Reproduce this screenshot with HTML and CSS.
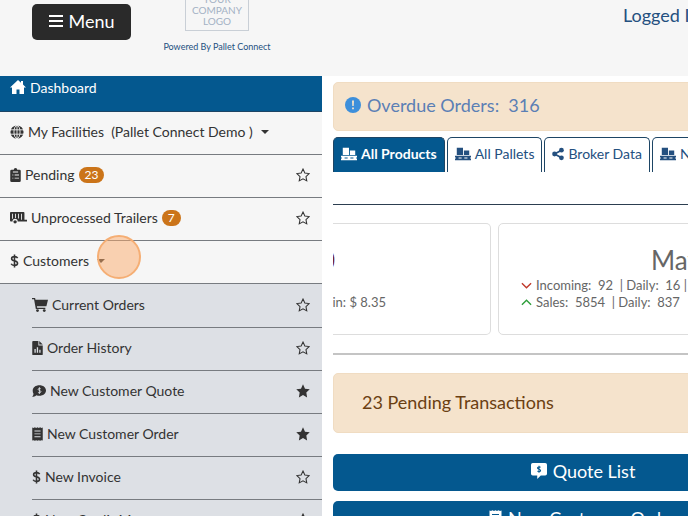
FILE: index.html
```
<!DOCTYPE html>
<html lang="en">
  <head>
    <meta charset="UTF-8" />
    <meta name="viewport" content="width=device-width, initial-scale=1.0" />
    <title>Pallet Connect - Dashboard</title>
    <link rel="stylesheet" href="styles.css">
  </head>
  <body>
    <!-- icon set -->
    <svg class="icon-defs" aria-hidden="true">
      <symbol id="bars" viewBox="0 0 16 16"><path d="M1 2h14v2H1zM1 7h14v2H1zM1 12h14v2H1z"/></symbol>
      <symbol id="home" viewBox="0 0 16 16"><path d="M8 1 0 8.400h2V15h4.500v-4.500h3V15H14V8.400h2L13 5.600V2h-2v1.800z"/></symbol>
      <symbol id="globe" viewBox="0 0 16 16"><circle cx="8" cy="8" r="7.500"/><path d="M0 5.500h16M0 10.500h16M8 0v16" fill="none" stroke="#f6f6f6"/><ellipse cx="8" cy="8" rx="3.500" ry="7.500" fill="none" stroke="#f6f6f6"/></symbol>
      <symbol id="clipboard" viewBox="0 0 12 16"><path fill-rule="evenodd" d="M1.500 2H4a2 2 0 0 1 4 0h2.500A1.500 1.500 0 0 1 12 3.500v11a1.500 1.500 0 0 1-1.500 1.500h-9A1.500 1.500 0 0 1 0 14.500v-11A1.500 1.500 0 0 1 1.500 2zM3 4v1h6V4zM2.500 7.500v1h1v-1zm2.500 0v1h5v-1zM2.500 11v1h1v-1zM5 11v1h5v-1z"/></symbol>
      <symbol id="trailer" viewBox="0 0 20 16"><path fill-rule="evenodd" d="M1 1h15a1 1 0 0 1 1 1v8h3v2H9a3 3 0 0 0-6 0H1a1 1 0 0 1-1-1V2a1 1 0 0 1 1-1zm1.500 2v6h1V3zm3.500 0v5h1V3zm3.500 0v5.500h1V3zM13 3v7h1V3z"/><circle cx="6" cy="12.500" r="2"/></symbol>
      <symbol id="dollar" viewBox="0 0 10 16"><path d="M8.600 4.600C8 3.500 6.700 3 5 3 3 3 1.700 3.900 1.700 5.300 1.700 8.600 8.500 7 8.500 10.600 8.500 12.200 7 13 5 13c-1.800 0-3.200-.600-3.800-1.900M5 .500v15" fill="none" stroke="currentColor" stroke-width="1.800"/></symbol>
      <symbol id="cart" viewBox="0 0 18 16"><path d="M0 0h3.500l.400 2H18l-1.800 7.500H5.500l.300 1.500H15v1.500H4.300L2.300 1.500H0z"/><circle cx="6.200" cy="14.300" r="1.600"/><circle cx="13.800" cy="14.300" r="1.600"/></symbol>
      <symbol id="file" viewBox="0 0 12 16"><path fill-rule="evenodd" d="M1 0h6v5h5v10a1 1 0 0 1-1 1H1a1 1 0 0 1-1-1V1a1 1 0 0 1 1-1zm1.500 9v4.500H4V9zm2.700-2v6.500h1.500V7zM8 10v3.500h1.500V10z"/><path d="M8 0v4h4z"/></symbol>
      <symbol id="quote" viewBox="0 0 16 16"><path d="M8.500 1.500C12.800 1.500 16 4 16 7.500s-3.200 6-7.500 6c-1.300 0-2.500-.200-3.500-.700C3.800 14 2 14.700 0 14.700c1-1 1.700-2.200 1.700-3.500C1 10 .800 8.800.800 7.500c0-3.500 3.400-6 7.700-6z"/><path d="M10 5.500C9.200 4.800 7 4.800 7 6.200s3.200 1 3.200 2.500S7.600 10.400 6.800 9.500M8.500 3.700v7.600" fill="none" stroke="#dde0e5"/></symbol>
      <symbol id="receipt" viewBox="0 0 12 16"><path fill-rule="evenodd" d="M0 .5 1.500 1 3 .3 4.500 1 6 .3 7.500 1 9 .3 10.500 1 12 .5v15l-1.500-.500-1.500.700-1.500-.700-1.500.700-1.500-.700-1.500.700L1.500 15 0 15.500zM2.500 4v1h7V4zm0 3.300v1h7v-1zm0 3.400v1h7v-1z"/></symbol>
      <symbol id="star" viewBox="0 0 16 16"><path d="m8 .4 2.300 4.900 5.400.700-3.900 3.800.900 5.500L8 12.700 3.300 15.300l.900-5.500L.3 6l5.400-.700z"/></symbol>
      <symbol id="star-line" viewBox="0 0 16 16"><path d="m8 1.200 2.100 4.500 4.900.700-3.600 3.400.900 4.900L8 12.300l-4.300 2.400.900-4.900L1 6.400l4.900-.700z" fill="none" stroke="currentColor" stroke-width="1.200"/></symbol>
      <symbol id="alert" viewBox="0 0 16 16"><circle cx="8" cy="8" r="8"/><path d="M7 3.500h2L8.700 9H7.300zM7.100 10.500h1.800v1.800H7.100z" fill="#f5e3cc"/></symbol>
      <symbol id="pallet" viewBox="0 0 18 16"><path d="M2 1h7v8H2zM10 4h6v5h-6zM0 10h18v1.800H0zM1 11h3v3H1zM7.500 11h3v3h-3zM14 11h3v3h-3zM0 13.200h18V15H0z"/></symbol>
      <symbol id="share" viewBox="0 0 14 16"><path d="M11 3.500 3 8l8 4.500" fill="none" stroke="currentColor" stroke-width="2"/><circle cx="11" cy="3.500" r="2.800"/><circle cx="3" cy="8" r="2.800"/><circle cx="11" cy="12.500" r="2.800"/></symbol>
      <symbol id="down" viewBox="0 0 12 12"><path d="m1 3.500 5 5 5-5" fill="none" stroke="currentColor" stroke-width="1.500"/></symbol>
      <symbol id="up" viewBox="0 0 12 12"><path d="m1 8.500 5-5 5 5" fill="none" stroke="currentColor" stroke-width="1.500"/></symbol>
      <symbol id="quote-box" viewBox="0 0 18 18"><path d="M2 0h14a2 2 0 0 1 2 2v10a2 2 0 0 1-2 2h-5l-4 4v-4H2a2 2 0 0 1-2-2V2a2 2 0 0 1 2-2z"/><path d="M10.700 5C9.800 4 7.300 4.200 7.300 5.700s3.500 1 3.500 2.600-2.800 1.700-3.600.700M9 3v8" fill="none" stroke="#04588f" stroke-width="1.200"/></symbol>
    </svg>

    <header class="topbar">
      <button class="menu-btn" type="button"><svg class="icon"><use href="#bars"/></svg> Menu</button>
      <div class="brand">
        <div class="logo"><span>YOUR</span><span>COMPANY</span><span>LOGO</span></div>
        <a href="#">Powered By Pallet Connect</a>
      </div>
      <a class="user-link" href="#">Logged In</a>
    </header>

    <div class="page">
      <nav class="sidebar">
        <a class="active" href="#"><svg class="icon"><use href="#home"/></svg> Dashboard</a>
        <ul class="menu">
          <li><a href="#"><svg class="icon small"><use href="#globe"/></svg> My Facilities&nbsp; (Pallet Connect Demo ) <i class="caret"></i></a></li>
          <li>
            <a href="#"><svg class="icon narrow"><use href="#clipboard"/></svg> Pending <span class="badge">23</span></a>
            <button class="fav" type="button" aria-label="Favourite"><svg class="icon"><use href="#star-line"/></svg></button>
          </li>
          <li>
            <a href="#"><svg class="icon wide"><use href="#trailer"/></svg> Unprocessed Trailers <span class="badge">7</span></a>
            <button class="fav" type="button" aria-label="Favourite"><svg class="icon"><use href="#star-line"/></svg></button>
          </li>
          <li><a href="#"><svg class="icon thin"><use href="#dollar"/></svg> Customers <i class="caret"></i></a><span class="click-mark"></span></li>
        </ul>
        <ul class="menu submenu">
          <li>
            <a href="#"><svg class="icon"><use href="#cart"/></svg> Current Orders</a>
            <button class="fav" type="button" aria-label="Favourite"><svg class="icon"><use href="#star-line"/></svg></button>
          </li>
          <li>
            <a href="#"><svg class="icon narrow"><use href="#file"/></svg> Order History</a>
            <button class="fav" type="button" aria-label="Favourite"><svg class="icon"><use href="#star-line"/></svg></button>
          </li>
          <li>
            <a href="#"><svg class="icon small"><use href="#quote"/></svg> New Customer Quote</a>
            <button class="fav" type="button" aria-label="Favourite"><svg class="icon"><use href="#star"/></svg></button>
          </li>
          <li>
            <a href="#"><svg class="icon narrow"><use href="#receipt"/></svg> New Customer Order</a>
            <button class="fav" type="button" aria-label="Favourite"><svg class="icon"><use href="#star"/></svg></button>
          </li>
          <li>
            <a href="#"><svg class="icon thin"><use href="#dollar"/></svg> New Invoice</a>
            <button class="fav" type="button" aria-label="Favourite"><svg class="icon"><use href="#star-line"/></svg></button>
          </li>
          <li>
            <a href="#"><svg class="icon thin"><use href="#dollar"/></svg> New Credit Memo</a>
            <button class="fav" type="button" aria-label="Favourite"><svg class="icon"><use href="#star-line"/></svg></button>
          </li>
        </ul>
      </nav>

      <main class="content">
        <a class="notice overdue" href="#"><svg class="icon"><use href="#alert"/></svg> Overdue Orders:&nbsp; 316</a>
        <div class="tabs">
          <button class="tab current" type="button"><svg class="icon"><use href="#pallet"/></svg> All Products</button>
          <button class="tab" type="button"><svg class="icon"><use href="#pallet"/></svg> All Pallets</button>
          <button class="tab" type="button"><svg class="icon share"><use href="#share"/></svg> Broker Data</button>
          <button class="tab" type="button"><svg class="icon"><use href="#pallet"/></svg> New Pallets</button>
        </div>
        <hr class="rule">
        <div class="cards">
          <section class="card">
            <h2 class="total">0</h2>
            <p class="margin">Margin: $ 8.35</p>
          </section>
          <section class="card">
            <h2>May</h2>
            <p><svg class="icon down"><use href="#down"/></svg> Incoming:&nbsp; 92&nbsp; | Daily:&nbsp; 16 |</p>
            <p><svg class="icon up"><use href="#up"/></svg> Sales:&nbsp; 5854&nbsp; | Daily:&nbsp; 837</p>
          </section>
        </div>
        <hr class="rule thick">
        <div class="notice pending">23 Pending Transactions</div>
        <button class="action" type="button"><svg class="icon"><use href="#quote-box"/></svg> Quote List</button>
        <button class="action" type="button"><svg class="icon receipt"><use href="#receipt"/></svg> New Customer Order</button>
      </main>
    </div>
  </body>
</html>
```
FILE: styles.css
```
* {
  margin: 0;
  padding: 0;
  box-sizing: border-box;
}

body {
  font-family: Lato, "Open Sans", sans-serif;
  font-size: 14px;
  color: #333;
  background-color: #fff;
  height: 100vh;
  overflow: hidden;
}

a {
  color: inherit;
  text-decoration: none;
}

button {
  font: inherit;
  color: inherit;
  border: none;
  background: none;
  cursor: pointer;
}

.icon-defs {
  display: none;
}

.icon {
  width: 16px;
  height: 16px;
  fill: currentColor;
  flex: none;
}

.icon.small {
  width: 14px;
  height: 14px;
}

.icon.narrow {
  width: 11px;
  height: 14px;
}

.icon.thin {
  width: 9px;
  height: 14px;
}

.icon.wide {
  width: 17px;
  height: 14px;
}

.icon.share {
  width: 12px;
}

.icon.receipt {
  width: 13px;
}

/* top bar */
.topbar {
  display: flex;
  align-items: flex-end;
  height: 76px;
  padding-left: 32px;
  background-color: #f6f6f6;
  color: #24507f;
  overflow: hidden;
}

.menu-btn {
  display: flex;
  align-items: center;
  justify-content: center;
  flex: none;
  gap: 4px;
  width: 99px;
  height: 36px;
  margin-bottom: 36px;
  padding-bottom: 3px;
  border-radius: 5px;
  background-color: #2a2a2a;
  color: #fff;
  font-size: 18px;
}

.brand {
  display: flex;
  flex: none;
  flex-direction: column;
  align-items: center;
  width: 108px;
  margin-left: 32px;
  margin-bottom: 24px;
  font-size: 9px;
  white-space: nowrap;
}

.logo {
  display: flex;
  flex-direction: column;
  align-items: center;
  width: 64px;
  margin-bottom: 10px;
  padding: 3px 0;
  border: 1px solid #c9cfd6;
  color: #a3b1c4;
  font-size: 10px;
  line-height: 11px;
}

.user-link {
  flex: none;
  margin-left: 352px;
  margin-bottom: 50px;
  font-size: 18px;
  white-space: nowrap;
}

/* layout */
.page {
  display: flex;
  gap: 11px;
}

.sidebar {
  flex: none;
  width: 322px;
  background-color: #f6f6f6;
}

.content {
  flex: 1 0 500px;
  min-width: 0;
  padding-top: 6px;
}

/* sidebar menu */
.active {
  display: flex;
  align-items: flex-start;
  gap: 4px;
  height: 36px;
  padding: 3px 10px;
  background-color: #04588f;
  border-bottom: 1px solid #1d4565;
  color: #fff;
}

.menu {
  list-style: none;
}

.menu li {
  display: flex;
  align-items: center;
  justify-content: space-between;
  position: relative;
  height: 43px;
  padding: 0 12px 3px 10px;
  border-bottom: 1px solid #777b80;
}

.menu a {
  display: flex;
  align-items: center;
  gap: 4px;
}

.submenu {
  padding: 1px 0 0 32px;
  background-color: #dde0e5;
}

.submenu li {
  padding-left: 0;
}

.fav {
  display: flex;
}

.fav .icon {
  width: 14px;
  height: 14px;
}

.badge {
  padding: 0 6px;
  border-radius: 8px;
  background-color: #cb7419;
  color: #fff;
  font-size: 12px;
  line-height: 16px;
}

.caret {
  margin-left: 4px;
  border: 4px solid transparent;
  border-top-color: currentColor;
  border-bottom: 0;
}

.click-mark {
  position: absolute;
  top: -6px;
  left: 97px;
  width: 44px;
  height: 44px;
  border: 2px solid #f5ae74;
  border-radius: 50%;
  background-color: rgba(251, 170, 105, 0.5);
}

/* dashboard */
.notice {
  display: flex;
  align-items: center;
  gap: 6px;
  border: 1px solid #f0dcc2;
  border-radius: 5px;
  background-color: #f5e3cc;
  font-size: 18px;
}

.overdue {
  height: 49px;
  padding: 0 11px 3px;
  color: #5b7fb5;
}

.overdue .icon {
  color: #3d8fdb;
}

.tabs {
  display: flex;
  gap: 2px;
  margin-top: 6px;
}

.tab {
  display: flex;
  align-items: center;
  flex: none;
  gap: 4px;
  height: 35px;
  padding: 0 7px 3px;
  border: 1px solid #1d4565;
  border-bottom: 0;
  border-radius: 5px 5px 0 0;
  color: #24507f;
  white-space: nowrap;
}

.tab.current {
  background-color: #04588f;
  color: #fff;
  font-weight: bold;
}

.rule {
  margin-top: 32px;
  border: none;
  border-top: 1px solid #2c3e50;
}

.rule.thick {
  margin-top: 18px;
  border-top: 2px solid #c4c4c4;
}

.cards {
  display: flex;
  gap: 7px;
  margin-top: 18px;
  color: #666;
  font-size: 13px;
}

.card {
  flex: none;
  width: 356px;
  height: 112px;
  padding: 19px 22px;
  border: 1px solid #ddd;
  border-radius: 5px;
}

.card:first-child {
  width: 158px;
  padding: 19px 0;
  border-left: 0;
  border-radius: 0 5px 5px 0;
}

.card h2 {
  font-size: 26px;
  font-weight: normal;
  line-height: 34px;
  text-align: center;
}

.card p {
  display: flex;
  align-items: center;
  gap: 4px;
  line-height: 17px;
}

.card .icon {
  width: 11px;
  height: 11px;
}

/* the first card is scrolled half out of view */
.card .total,
.card .margin {
  display: flex;
  justify-content: flex-end;
  overflow: hidden;
  white-space: nowrap;
}

.card .total {
  width: 2px;
  color: #7a2222;
}

.card .margin {
  width: 53px;
  margin-top: 17px;
}

.down {
  color: #c0392b;
}

.up {
  color: #2e9e3a;
}

.pending {
  height: 60px;
  margin-top: 18px;
  margin-bottom: 21px;
  padding: 0 28px 3px;
  color: #6b3f12;
}

.action {
  display: flex;
  align-items: center;
  justify-content: center;
  gap: 6px;
  width: 100%;
  height: 37px;
  margin-bottom: 10px;
  padding-bottom: 3px;
  border-radius: 5px;
  background-color: #04588f;
  color: #fff;
  font-size: 18px;
}
```
